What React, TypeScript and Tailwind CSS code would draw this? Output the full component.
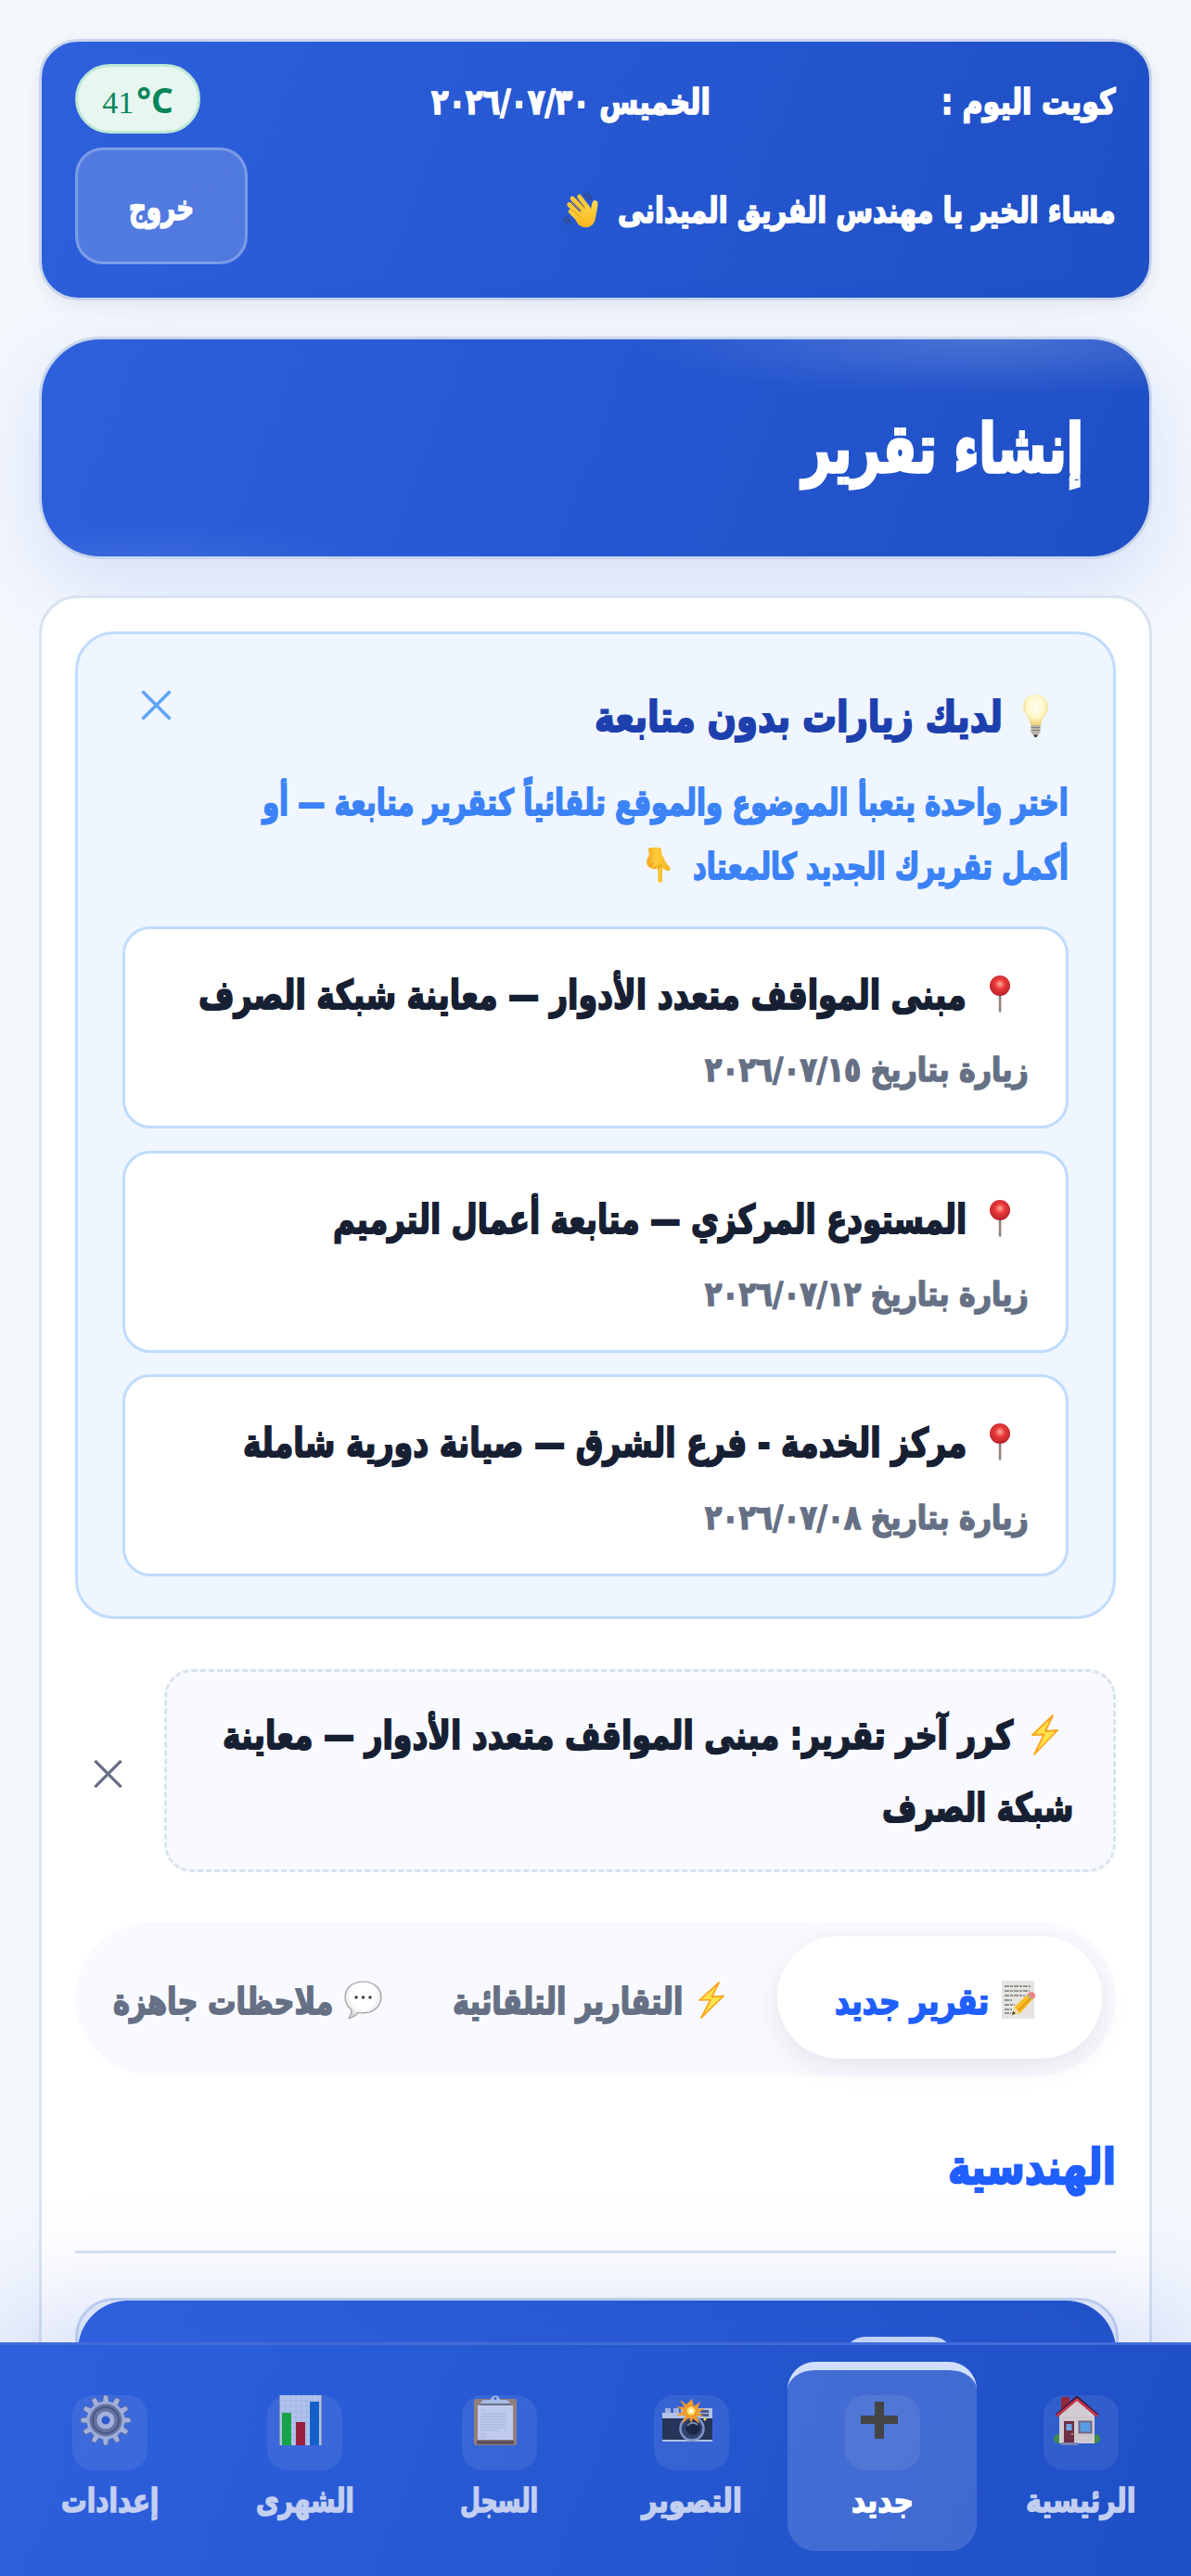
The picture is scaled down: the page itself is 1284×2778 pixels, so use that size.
import { useLayoutEffect, useRef, type ReactNode } from 'react'
import clsx from 'clsx'

const visits = [
  { title: 'مبنى المواقف متعدد الأدوار — معاينة شبكة الصرف', date: 'زيارة بتاريخ ٢٠٢٦/٠٧/١٥', width: 'w-[828px]' },
  { title: 'المستودع المركزي — متابعة أعمال الترميم', date: 'زيارة بتاريخ ٢٠٢٦/٠٧/١٢', width: 'w-[683px]' },
  { title: 'مركز الخدمة - فرع الشرق — صيانة دورية شاملة', date: 'زيارة بتاريخ ٢٠٢٦/٠٧/٠٨', width: 'w-[780px]' },
]

// One line of text, condensed or stretched to the width of its box
function FitText({ children, className }: { children: ReactNode; className?: string }) {
  const box = useRef<HTMLSpanElement>(null)
  const inner = useRef<HTMLSpanElement>(null)

  useLayoutEffect(() => {
    if (!box.current || !inner.current) return
    const ratio = box.current.clientWidth / inner.current.offsetWidth
    inner.current.style.transform = `scaleX(${ratio})`
  }, [])

  return (
    <span ref={box} className={clsx('block shrink-0 whitespace-nowrap [-webkit-text-stroke:0.045em_currentColor]', className)}>
      <span ref={inner} className="inline-block origin-right">{children}</span>
    </span>
  )
}

function WaveIcon() {
  return (
    <svg viewBox="0 0 40 40" className="w-[40px] h-[40px] mt-[7px] shrink-0">
      <defs>
        <linearGradient id="hand" x1="0" y1="0" x2="0" y2="1">
          <stop offset="0" stopColor="#ffd94f" />
          <stop offset="1" stopColor="#f9b51c" />
        </linearGradient>
      </defs>
      <path d="M8 22l12 12M6.500 14.500l14 14M10 8l15 15M17.500 6l10 13" stroke="#fdc935" strokeWidth="4.600" strokeLinecap="round" />
      <path d="M12 27L27 16l3 4c1-5 1-9 4-10 4 0 4 4 3 8l-2 11c-1 7-6 11-12 10-5 0-9-5-11-12z" fill="url(#hand)" />
      <path d="M9 19.500l9 8M9 12l11 11M14.500 9l9 10" stroke="#d98f14" strokeWidth="1" strokeLinecap="round" />
      <path d="M22 3c3 2 5 4 6 7M26 2c2 2 4 4 5 7M4 28c1 3 3 5 5 7M1 29c1 4 3 6 5 8" stroke="#38456a" strokeWidth="1.200" fill="none" />
    </svg>
  )
}

function BulbIcon() {
  return (
    <svg viewBox="0 0 27 46" className="w-[27px] h-[46px] mt-[23px] shrink-0">
      <defs>
        <radialGradient id="bulb" cx=".5" cy=".4" r=".6">
          <stop offset="0" stopColor="#fffef2" />
          <stop offset=".6" stopColor="#fdf7c9" />
          <stop offset="1" stopColor="#eccf72" />
        </radialGradient>
      </defs>
      <path d="M13.500 0C5.500 0 0 6 0 13.500 0 21 7.500 25 8 33h11c.5-8 8-12 8-19.500C27 6 21.500 0 13.500 0z" fill="url(#bulb)" />
      <path d="M8.500 33h10v8l-3 3h-4l-3-3z" fill="#b9b4a8" />
      <path d="M8.500 35.500h10M8.500 38.500h10" stroke="#8b867c" strokeWidth="1" />
      <path d="M11 43.500h5l-1.500 2.500h-2z" fill="#35332f" />
    </svg>
  )
}

function PointDownIcon() {
  return (
    <svg viewBox="0 0 26 38" className="w-[26px] h-[38px] mt-[14px] shrink-0">
      <defs>
        <linearGradient id="finger" x1="0" y1="0" x2="1" y2="0">
          <stop offset="0" stopColor="#f2a51d" />
          <stop offset=".4" stopColor="#ffcb3a" />
          <stop offset="1" stopColor="#f8b424" />
        </linearGradient>
      </defs>
      <path d="M2 1c4-1.500 10-1.500 14 0 0 4 0 6 2 9 2 4 3 7 6 10 2 2 2 4 0 5-3 0-5-1-7-3v14c0 2.500-4.500 2.500-4.500 0L12 23c-5 1-10-1-11.500-5-1-4 .5-6 2-9C3 6 2 4 2 1z" fill="url(#finger)" />
      <path d="M4 21c1-2 2-2 3-4M8 23c1-2 2-2 3-4M12.500 23l1-4M17 22l-2-4" stroke="#d98c12" strokeWidth="1" fill="none" />
    </svg>
  )
}

function PinIcon() {
  return (
    <svg viewBox="0 0 22 40" className="w-[22px] h-[40px] mt-[50px] shrink-0">
      <defs>
        <radialGradient id="pin" cx=".5" cy=".42" r=".58">
          <stop offset="0" stopColor="#ffb09a" />
          <stop offset=".4" stopColor="#ea3c3c" />
          <stop offset="1" stopColor="#b81f2b" />
        </radialGradient>
      </defs>
      <path d="M9.800 20h2.600v19l-1.300 1-1.300-1z" fill="#94827b" />
      <ellipse cx="11" cy="11" rx="11" ry="11" fill="url(#pin)" />
    </svg>
  )
}

function BoltIcon({ className }: { className: string }) {
  return (
    <svg viewBox="0 0 30 44" className={clsx('shrink-0', className)} preserveAspectRatio="none">
      <path d="M24 1L2 22l12.500-.5L4 43l25-26-13 1z" fill="#ffe34d" stroke="#fba31a" strokeWidth="1.800" strokeLinejoin="round" />
    </svg>
  )
}

function NoteIcon() {
  return (
    <svg viewBox="0 0 36 41" className="w-[36px] h-[41px] mt-[48px] shrink-0">
      <path d="M0 0h35v41H0z" fill="#e5e4e1" />
      <path d="M3 6h28M3 11h27M3 16h22M3 21h8M3 26h11M3 31h8M3 35h7" stroke="#77777a" strokeWidth="1.300" strokeDasharray="5 1 3 1" />
      <path d="M11 37l3-9L30 13l5 5-15 17z" fill="#f8bd22" />
      <path d="M17 33l16-16" stroke="#d98e12" strokeWidth="1.500" />
      <path d="M28 14l3-2c4 0 6 3 5 6l-3 2z" fill="#ee8583" />
      <path d="M27.500 15l5 5" stroke="#9cae9c" strokeWidth="1.500" />
      <path d="M11 37l3-8 5 5z" fill="#f6dfb0" />
      <path d="M11 37l1-4 3 2z" fill="#333" />
    </svg>
  )
}

function BubbleIcon() {
  return (
    <svg viewBox="0 0 41 41" className="w-[41px] h-[41px] mt-[48px] shrink-0">
      <defs>
        <radialGradient id="bubble" cx=".5" cy=".4" r=".6">
          <stop offset=".6" stopColor="#fff" />
          <stop offset="1" stopColor="#cfcfcf" />
        </radialGradient>
      </defs>
      <path d="M20.500 1C9 1 1 8 1 17.500c0 7 3 11 7 14 0 4-1 6-3 9 5-1 8-3 10-6 14 2 25-5 25-17C40 8 32 1 20.500 1z" fill="url(#bubble)" stroke="#a0a0a0" strokeWidth="1.200" />
      <circle cx="13" cy="18" r="1.800" fill="#444" />
      <circle cx="20.500" cy="18" r="1.800" fill="#444" />
      <circle cx="28" cy="18" r="1.800" fill="#444" />
    </svg>
  )
}

function CloseIcon({ className }: { className: string }) {
  return (
    <svg viewBox="0 0 33 33" fill="none" stroke="currentColor" strokeWidth="3.600" className={clsx('shrink-0', className)}>
      <path d="M1.500 1.500l30 30M31.500 1.500l-30 30" />
    </svg>
  )
}

function GearIcon() {
  const teeth = Array.from({ length: 12 }, (_, i) => i * 30)
  return (
    <svg viewBox="0 0 54 54" className="w-[54px] h-[54px] -ml-[9px]">
      {teeth.map(a => (
        <path key={a} d="M23.500 8L24.500 0h5l1 8z" fill="#a3b1dc" stroke="#4d5d94" strokeWidth=".8" transform={`rotate(${a} 27 27)`} />
      ))}
      <circle cx="27" cy="27" r="19" fill="#66759f" stroke="#9fadd9" strokeWidth="3" />
      <circle cx="27" cy="27" r="14" fill="none" stroke="#465788" strokeWidth="2" />
      <circle cx="27" cy="27" r="7" fill="#2d59ca" stroke="#a3b1dc" strokeWidth="5" />
    </svg>
  )
}

function ChartIcon() {
  return (
    <svg viewBox="0 0 46 54" className="w-[46px] h-[54px] -ml-[9px]">
      <path d="M0 0h46v54H0z" fill="#b1c3ec" />
      <path d="M0 6h46M0 12h46M0 18h46M0 24h46M0 30h46M0 36h46M0 42h46M0 48h46M6 0v54M12 0v54M18 0v54M24 0v54M30 0v54M36 0v54M42 0v54" stroke="#a0b4e3" strokeWidth=".8" />
      <path d="M.5 0v54M45.500 0v54" stroke="#8790b4" />
      <path d="M3 19h10v35H3z" fill="#17a34a" />
      <path d="M18 29h10v25H18z" fill="#98203f" />
      <path d="M33 7h10v47H33z" fill="#1560c8" />
    </svg>
  )
}

function ClipboardIcon() {
  return (
    <svg viewBox="0 0 46 54" className="w-[46px] h-[54px] -ml-[9px]">
      <rect y="4" width="46" height="50" rx="2" fill="#927f80" />
      <path d="M3 49h40v4H3z" fill="#5e5560" />
      <path d="M4 11h38v37H4z" fill="#bfcbee" />
      <path d="M7 16h5M7 20h27M7 23h28M7 26h28M7 29h27M7 32h26M7 35h27M7 38h20M7 42h5M7 45h7" stroke="#adb9de" strokeWidth="1.500" />
      <path d="M7 10c0-3 2-5 6-5h5c1-6 9-6 10 0h5c4 0 6 2 6 5z" fill="#a8b9e5" />
      <path d="M7 10h32" stroke="#5a607c" strokeWidth="1.500" />
      <circle cx="23" cy="3.500" r="1.500" fill="#3d62c4" />
    </svg>
  )
}

function CameraIcon() {
  return (
    <svg viewBox="0 0 54 54" className="w-[54px] h-[54px] -ml-[9px]">
      <path d="M3 14h6v6H3zM12 14h6v6h-6z" fill="#9eb0dd" />
      <path d="M0 19h20v6H0zM20 14h34v12H20z" fill="#b4c2e7" />
      <path d="M0 25h54v24H0z" fill="#27345a" />
      <path d="M0 48h54v2H0z" fill="#b4c2e7" />
      <path d="M41 16h9v7h-9z" fill="#4a5b8c" />
      <path d="M41 19.500h9" stroke="#b4c2e7" />
      <circle cx="32" cy="36" r="12.500" fill="#31426f" stroke="#8094c8" strokeWidth="2.500" />
      <circle cx="33" cy="35" r="8" fill="#1c2848" />
      <path d="M27 33c3-4 8-4 11-1" stroke="#7689b8" strokeWidth="2" fill="none" />
      <circle cx="46" cy="26" r="1.500" fill="#f5dd4b" />
      <path d="M32 4l2 8 7-5-3 8 8-1-7 5 6 4-8-1 3 9-7-6-2 6-2-7-8 7 4-9-10 0 8-5-8-5 9 1-5-8 7 5z" fill="#ee9a2d" />
      <circle cx="31" cy="17" r="4.500" fill="#ffe471" />
      <circle cx="31" cy="17" r="2" fill="#fff" />
    </svg>
  )
}

function PlusIcon() {
  return (
    <svg viewBox="0 0 40 54" className="w-[40px] h-[54px] -ml-[7px]">
      <path d="M15 7h10v15h15v9H25v16H15V31H0v-9h15z" fill="#444" />
    </svg>
  )
}

function HomeIcon() {
  return (
    <svg viewBox="0 0 50 54" className="w-[50px] h-[54px] -ml-[9px]">
      <path d="M8 2h9v12l-9 8z" fill="#96283e" />
      <circle cx="5" cy="47" r="5" fill="#3f8a4c" />
      <circle cx="45" cy="47" r="5" fill="#3f8a4c" />
      <path d="M6 20L25 4l19 16v32H6z" fill="#d3cdd3" />
      <path d="M9 24h32M9 28h32M9 44h32M9 48h32" stroke="#bdb6c1" strokeWidth=".8" />
      <path d="M3 22L25 3l22 19" fill="none" stroke="#3e1d36" strokeWidth="4" />
      <path d="M3 22.500L25 4.500l22 18" fill="none" stroke="#cf3350" strokeWidth="2.400" />
      <path d="M11 28h11v24H11z" fill="#6d3045" />
      <path d="M13.500 31h6v7h-6z" fill="#6eaae6" />
      <circle cx="20" cy="42" r="1" fill="#e6b94a" />
      <path d="M27.500 28.500h13v12h-13z" fill="#5b9de3" stroke="#6f6886" strokeWidth="2" />
      <path d="M8 51h18v3H8z" fill="#7c84ad" />
    </svg>
  )
}

const navItems = [
  { label: 'الرئيسية', icon: <HomeIcon />, cell: 'w-[213px]', width: 'w-[118px]' },
  { label: 'جديد', icon: <PlusIcon />, cell: 'w-[204px]', width: 'w-[67px]', active: true },
  { label: 'التصوير', icon: <CameraIcon />, cell: 'w-[195px]', width: 'w-[108px]' },
  { label: 'السجل', icon: <ClipboardIcon />, cell: 'w-[207px]', width: 'w-[84px]' },
  { label: 'الشهرى', icon: <ChartIcon />, cell: 'w-[201px]', width: 'w-[106px]' },
  { label: 'إعدادات', icon: <GearIcon />, cell: 'w-[207px]', width: 'w-[105px]' },
]

function Header() {
  return (
    <header className="h-[282px] rounded-[42px] border-3 border-[#c8d5ec] bg-linear-[110deg,#2e60dd,#1e4fc5] bg-origin-border px-[36px] pt-[24px] text-white text-[38px] shadow-[0_6px_18px_rgba(23,32,51,0.07)]">
      <div className="flex justify-between h-[75px]">
        <FitText className="w-[188px] leading-[82px]">كويت اليوم :</FitText>
        <FitText className="w-[301px] leading-[82px]">الخميس ٢٠٢٦/٠٧/٣٠</FitText>
        <div dir="ltr" className="w-[135px] h-[75px] rounded-full border-3 border-[#bde8d6] bg-[#e7f6f0] text-[#07855a] flex items-baseline justify-center gap-[3px] leading-[72px]">
          <span className="font-['Liberation_Serif'] font-normal text-[34px]">41</span>
          <span className="font-['Noto_Sans'] font-bold text-[37px]">°C</span>
        </div>
      </div>
      <div className="flex justify-between mt-[15px]">
        <div className="flex gap-[19px]">
          <FitText className="w-[537px] leading-[136px]">مساء الخير يا مهندس الفريق الميدانى</FitText>
          <div className="pt-[40px]"><WaveIcon /></div>
        </div>
        <button className="w-[186px] h-[126px] rounded-[30px] border-3 border-white/25 bg-white/18 flex justify-center">
          <FitText className="w-[70px] leading-[124px]">خروج</FitText>
        </button>
      </div>
    </header>
  )
}

function Hero() {
  return (
    <section className="h-[240px] mt-[39px] rounded-[66px] border-3 border-[#c8d5ec] bg-[radial-gradient(ellipse_380px_62px_at_1020px_0,rgba(255,255,255,0.18),transparent),radial-gradient(ellipse_260px_36px_at_110px_100%,rgba(255,255,255,0.06),transparent),linear-gradient(110deg,#2e60dd,#1e4fc5)] pr-[71px] text-white shadow-[0_30px_90px_rgba(60,100,225,0.17)]">
      <FitText className="w-[303px] text-[73px] leading-[236px]">إنشاء تقرير</FitText>
    </section>
  )
}

function PendingVisits() {
  return (
    <section className="h-[1065px] rounded-[42px] border-3 border-[#bfdbfe] bg-[#eff6ff] px-[48px] pt-[42px]">
      <div className="flex justify-between h-[105px]">
        <div className="flex gap-[22px] pr-[22px] text-[46px] text-[#1e40af]">
          <BulbIcon />
          <FitText className="w-[440px] leading-[94px]">لديك زيارات بدون متابعة</FitText>
        </div>
        <button className="text-[#60a5fa] self-start mt-[18px] ml-[20px]">
          <CloseIcon className="w-[33px] h-[33px]" />
        </button>
      </div>
      <div className="h-[168px] text-[39px] leading-[69px] text-[#3b82f6]">
        <FitText className="w-[869px]">اختر واحدة يتعبأ الموضوع والموقع تلقائياً كتقرير متابعة — أو</FitText>
        <div className="flex gap-[24px]">
          <FitText className="w-[405px]">أكمل تقريرك الجديد كالمعتاد</FitText>
          <PointDownIcon />
        </div>
      </div>
      <div className="flex flex-col gap-[23.500px]">
        {visits.map(visit => (
          <div key={visit.date} className="h-[218px] rounded-[30px] border-3 border-[#bfdbfe] bg-white pr-[40px]">
            <div className="flex gap-[25px] h-[115px] pr-[20px] text-[43px] leading-[142px] text-[#172033]">
              <PinIcon />
              <FitText className={visit.width}>{visit.title}</FitText>
            </div>
            <FitText className="w-[349px] text-[36px] leading-[73px] text-[#667085]">{visit.date}</FitText>
          </div>
        ))}
      </div>
    </section>
  )
}

function RepeatReport() {
  return (
    <div className="flex justify-between items-center mt-[54px]">
      <div className="w-[1026px] h-[219px] rounded-[30px] border-3 border-dashed border-[#d8e3f0] bg-[#f9faff] pt-[30px] pr-[43px] text-[42px] leading-[78px] text-[#172033]">
        <div className="flex gap-[19px] pr-[16px]">
          <BoltIcon className="w-[30px] h-[44px] mt-[16px]" />
          <FitText className="w-[852px]">كرر آخر تقرير: مبنى المواقف متعدد الأدوار — معاينة</FitText>
        </div>
        <FitText className="w-[206px]">شبكة الصرف</FitText>
      </div>
      <button className="text-[#667085] pt-[6px] pl-[20px]">
        <CloseIcon className="w-[31px] h-[32px]" />
      </button>
    </div>
  )
}

function Tabs() {
  return (
    <div className="flex h-[165px] mt-[54px] p-[15px] rounded-full bg-[#f9faff] text-[39px] leading-[141px] text-[#667085]">
      <button className="flex gap-[14px] w-[350px] h-[132px] pr-[72px] rounded-full bg-white text-[#1f5eff] shadow-[0_9px_30px_rgba(23,32,51,0.09)]">
        <NoteIcon />
        <FitText className="w-[166px]">تقرير جديد</FitText>
      </button>
      <button className="flex gap-[16px] mr-[57px]">
        <BoltIcon className="w-[29px] h-[40px] mt-[49px]" />
        <FitText className="w-[248px]">التقارير التلقائية</FitText>
      </button>
      <button className="flex gap-[12px] mr-[76px]">
        <BubbleIcon />
        <FitText className="w-[237px]">ملاحظات جاهزة</FitText>
      </button>
    </div>
  )
}

function BottomNav() {
  return (
    <nav className="absolute inset-x-0 bottom-0 flex gap-[6px] h-[252px] pt-[18px] pr-[12px] border-t-3 border-[#436bd9] bg-linear-[110deg,#2e60dd,#1e4fc5] shadow-[0_-36px_120px_rgba(60,100,225,0.22)] text-[35px]">
      {navItems.map(item => (
        <button
          key={item.label}
          className={clsx(
            'flex flex-col items-center shrink-0 h-[204px] rounded-[30px]',
            item.cell,
            item.active ? 'border-t-9 border-[#d0dfff] bg-white/14 pt-[27px] text-white' : 'pt-[36px] text-[#c3cff1]'
          )}
        >
          <span className="flex justify-center w-[81px] h-[81px] rounded-[22px] bg-white/8">{item.icon}</span>
          <FitText className={clsx('mt-[6px] leading-[54px]', item.width)}>{item.label}</FitText>
        </button>
      ))}
    </nav>
  )
}

export default function App() {
  return (
    <div dir="rtl" className="relative w-[1284px] h-[2778px] overflow-hidden bg-[#f4f8fd] px-[42px] pt-[42px] font-['DejaVu_Sans',sans-serif] font-bold">
      <Header />
      <Hero />
      <main className="h-[2200px] mt-[39px] rounded-[42px] border-3 border-[#d9e3f0] bg-white px-[36px] pt-[36px]">
        <PendingVisits />
        <RepeatReport />
        <Tabs />
        <h2 className="h-[192px] border-b-3 border-[#d8e3f0] text-[52px] leading-[198px] text-[#1f5eff]">
          <FitText className="w-[181px]">الهندسية</FitText>
        </h2>
        <div className="h-[300px] mt-[48px] -mr-[3px] rounded-[42px] border-3 border-[#c8d7ef] bg-[#edf3fd]">
          <div className="h-[294px] rounded-[54px] bg-linear-[110deg,#2e60dd,#1e4fc5] pt-[39px] pr-[174px]">
            <div className="w-[120px] h-[60px] rounded-[24px] bg-[#dce7fc]" />
          </div>
        </div>
      </main>
      <BottomNav />
    </div>
  )
}
